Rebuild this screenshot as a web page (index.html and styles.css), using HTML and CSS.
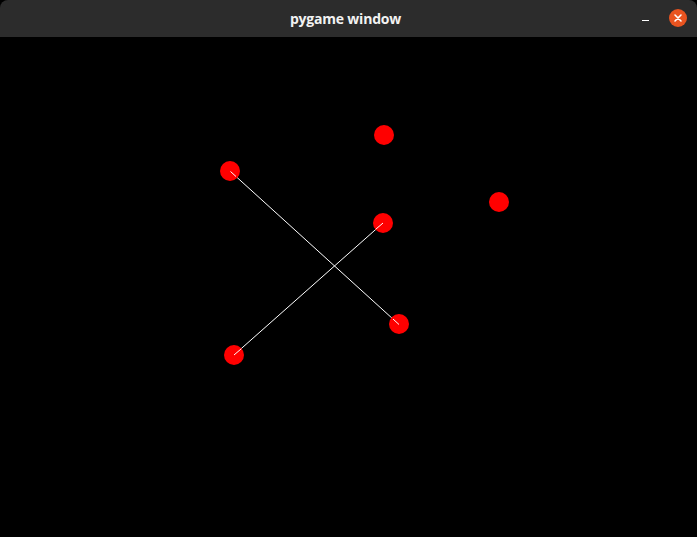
FILE: index.html
```html
<!DOCTYPE html>
<html lang="en">
<head>
    <meta charset="UTF-8">
    <title>pygame window</title>
    <link rel="stylesheet" href="styles.css">
</head>
<body>

<div class="window">
    <header class="titlebar">
        <span class="title">pygame window</span>
        <div class="controls">
            <span class="minimize"></span>
            <span class="close">
                <svg width="18" height="18" viewBox="0 0 18 18">
                    <circle cx="9" cy="9" r="9" fill="#e95420"/>
                    <path d="M6 6 L12 12 M12 6 L6 12" stroke="#fff" stroke-width="1.6" stroke-linecap="round"/>
                </svg>
            </span>
        </div>
    </header>

    <!-- game surface: points and the segments joining them -->
    <svg class="surface" width="697" height="500" viewBox="0 0 697 500">
        <g stroke="#fff" stroke-width="1">
            <line x1="230.5" y1="134.5" x2="399" y2="287.5"/>
            <line x1="383" y1="186" x2="234" y2="318"/>
        </g>
        <g fill="#ff0000">
            <circle cx="384" cy="98" r="10"/>
            <circle cx="230" cy="134" r="10"/>
            <circle cx="499" cy="165" r="10"/>
            <circle cx="383" cy="186" r="10"/>
            <circle cx="399" cy="287" r="10"/>
            <circle cx="234" cy="318" r="10"/>
        </g>
        <g stroke="#fff" stroke-width="1">
            <line x1="230.5" y1="134.5" x2="236" y2="139.5"/>
            <line x1="383" y1="186" x2="376" y2="192"/>
            <line x1="399" y1="287.5" x2="393" y2="282"/>
            <line x1="234" y1="318" x2="241" y2="312"/>
        </g>
    </svg>
</div>

</body>
</html>
```

FILE: styles.css
```css
body {
    margin: 0;
    padding: 0;
    background-color: #000;
    overflow: hidden;
}

.window {
    width: 697px;
    height: 537px;
    display: flex;
    flex-direction: column;
    background-color: #000;
}

.titlebar {
    height: 37px;
    flex-shrink: 0;
    background-color: #2c2c2c;
    border-radius: 8px 8px 0 0;
    display: flex;
    align-items: center;
    justify-content: center;
    position: relative;
}

.title {
    font-family: "Open Sans", "Noto Sans", sans-serif;
    font-weight: 700;
    font-size: 14px;
    letter-spacing: -0.2px;
    color: #f2f2f2;
    margin-right: 6px;
}

.controls {
    position: absolute;
    right: 10px;
    top: 9px;
    display: flex;
    align-items: center;
    gap: 20px;
}

.minimize {
    display: block;
    width: 7px;
    height: 1px;
    background-color: #fff;
    margin-top: 4px;
}

.close {
    display: block;
    width: 18px;
    height: 18px;
}

.surface {
    display: block;
}
```
